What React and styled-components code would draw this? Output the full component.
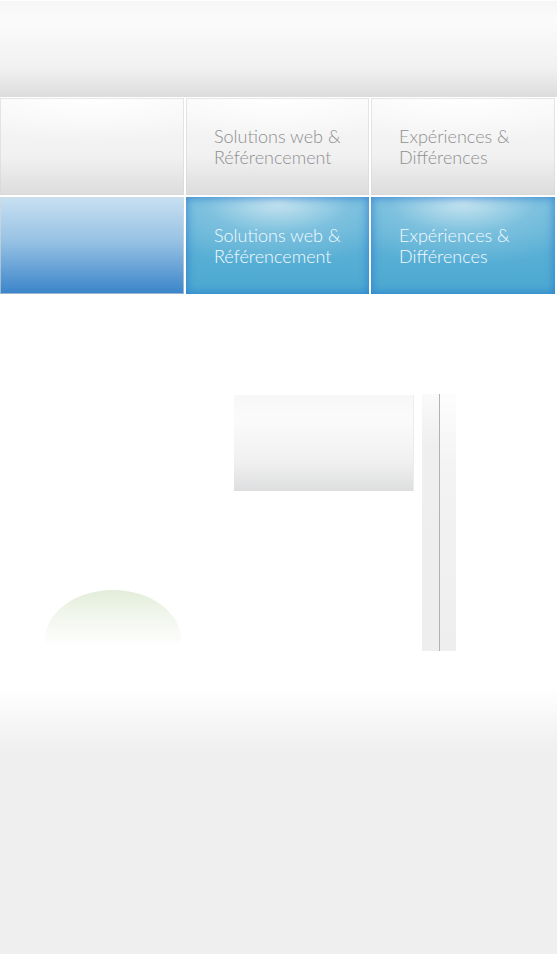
import React from 'react';
import styled, { createGlobalStyle } from 'styled-components';

const GlobalStyle = createGlobalStyle`
  html, body {
    margin: 0;
    padding: 0;
    background: #fff;
  }
  body {
    font-family: "Lato", "Open Sans", sans-serif;
  }
`;

const items = [
  { label: null },
  { label: ['Solutions web &', 'Référencement'] },
  { label: ['Expériences &', 'Différences'] },
];

const App = () => {
  return (
    <Page>
      <GlobalStyle />
      <Header />
      <Nav>
        {items.map((it, i) => (
          <Cell key={'a' + i}>
            {it.label && <Label>{it.label[0]}<br />{it.label[1]}</Label>}
          </Cell>
        ))}
        {items.map((it, i) => (
          <Cell key={'b' + i} active plain={!it.label}>
            {it.label && <Label active>{it.label[0]}<br />{it.label[1]}</Label>}
          </Cell>
        ))}
      </Nav>
      <Main>
        <LeftCol>
          <Dome />
        </LeftCol>
        <Box />
        <Bar>
          <BarHalf />
          <BarHalf light />
        </Bar>
      </Main>
      <Footer />
    </Page>
  );
};

export default App;

const Page = styled.div`
  width: 557px;
  min-height: 954px;
  display: flex;
  flex-direction: column;
`;

const Header = styled.div`
  height: 97px;
  background: linear-gradient(to bottom, #f6f6f6 0%, #fbfbfb 20%, #f1f1f1 70%, #dcdcdd 100%);
  border-top: 1px solid #fdfdfd;
  box-sizing: border-box;
`;

const Nav = styled.div`
  display: grid;
  grid-template-columns: 184px 183px 184px;
  grid-auto-rows: 97px;
  gap: 2px;
  padding-top: 1px;
  background: #fff;
`;

const Cell = styled.div`
  display: flex;
  align-items: center;
  padding-left: 28px;
  box-sizing: border-box;
  background: ${({ active, plain }) =>
    !active
      ? 'radial-gradient(ellipse 90% 45% at 50% 0%, #ffffff 0%, rgba(255,255,255,0) 100%), linear-gradient(to bottom, #f7f7f7 0%, #f1f1f1 60%, #dcdcdd 100%)'
      : plain
      ? 'linear-gradient(to bottom, #c8e0f2 0%, #98c2e4 45%, #3a84ca 100%)'
      : 'radial-gradient(ellipse 80% 65% at 50% 5%, #c8e5f0 0%, rgba(140,200,225,0.6) 50%, rgba(80,170,210,0) 100%), linear-gradient(to bottom, #6db9dc 0%, #4aa8d0 100%)'};
  box-shadow: ${({ active, plain }) =>
    active && !plain ? 'inset 0 0 8px 1px rgba(40,120,205,0.75)' : 'inset 0 0 0 1px rgba(215,215,215,0.6)'};
`;

const Label = styled.div`
  font-size: 18px;
  font-weight: 300;
  line-height: 21px;
  color: ${({ active }) => (active ? '#f4fbff' : '#8f8f8f')};
`;

const Main = styled.div`
  display: flex;
  align-items: flex-start;
  height: 392px;
  padding-top: 100px;
  box-sizing: border-box;
`;

const LeftCol = styled.div`
  width: 234px;
  padding: 196px 0 0 45px;
  box-sizing: border-box;
`;

const Dome = styled.div`
  width: 136px;
  height: 60px;
  border-radius: 68px 68px 0 0 / 50px 50px 0 0;
  background: linear-gradient(to bottom, #e3edd9 0%, #f2f7ee 45%, #ffffff 95%);
`;

const Box = styled.div`
  width: 180px;
  height: 96px;
  margin-top: 1px;
  background: linear-gradient(to bottom, #f7f7f7 0%, #fbfbfb 25%, #f0f0f0 70%, #dddedf 100%);
  border-right: 1px solid #ececec;
  box-sizing: border-box;
`;

const Bar = styled.div`
  display: flex;
  width: 34px;
  height: 257px;
  margin-left: 8px;
`;

const BarHalf = styled.div`
  flex: 1;
  background: ${({ light }) =>
    light
      ? 'linear-gradient(to bottom, #fdfdfd 0%, #f3f3f3 30%, #eeeeee 100%)'
      : 'linear-gradient(to bottom, #fafafa 0%, #efefef 20%, #eeeeee 100%)'};
  border-left: ${({ light }) => (light ? '1px solid #b2b2b2' : 'none')};
`;

const Footer = styled.div`
  flex: 1;
  background: linear-gradient(to bottom, #ffffff 0%, #fafafa 8%, #f1f2f1 20%, #efefef 26%, #efefef 100%);
`;
